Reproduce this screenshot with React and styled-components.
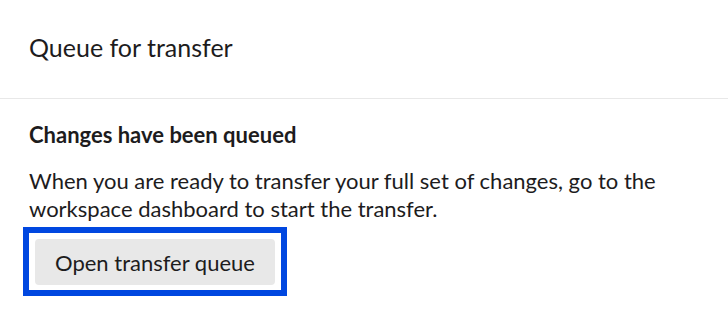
import React from "react";
import styled, { createGlobalStyle } from "styled-components";

const Global = createGlobalStyle`
  html, body { margin: 0; padding: 0; background: #ffffff; }
  body { font-family: Lato, "Open Sans", sans-serif; color: #1d1c1d; }
`;

const Page = styled.div`
  width: 728px;
  height: 319px;
  display: flex;
  flex-direction: column;
  background: #fff;
`;

const Header = styled.header`
  height: 99px;
  box-sizing: border-box;
  padding: 0 29px 4px;
  display: flex;
  align-items: center;
  border-bottom: 1px solid #e8e8e8;
`;

const Title = styled.h1`
  margin: 0;
  font-size: 25px;
  font-weight: 400;
  line-height: 30px;
`;

const Body = styled.section`
  padding: 22px 29px 0;
  display: flex;
  flex-direction: column;
  align-items: flex-start;
`;

const Heading = styled.h2`
  margin: 0;
  font-size: 22px;
  font-weight: 700;
  line-height: 28px;
`;

const Text = styled.p`
  margin: 18px 0 0;
  font-size: 22px;
  line-height: 28px;
`;

const FocusRing = styled.div`
  margin: 4px 0 0 -6px;
  padding: 6px 6px 5px;
  border: 6px solid #0047e0;
  display: flex;
`;

const Button = styled.button`
  height: 46px;
  padding: 0 20px;
  font-family: Lato, "Open Sans", sans-serif;
  font-size: 22px;
  color: #1d1c1d;
  background: #e8e8e8;
  border: none;
  border-radius: 4px;
  outline: none;
`;

export default function App() {
  return (
    <>
      <Global />
      <Page>
        <Header>
          <Title>Queue for transfer</Title>
        </Header>
        <Body>
          <Heading>Changes have been queued</Heading>
          <Text>
            When you are ready to transfer your full set of changes, go to the
            <br />
            workspace dashboard to start the transfer.
          </Text>
          <FocusRing>
            <Button>Open transfer queue</Button>
          </FocusRing>
        </Body>
      </Page>
    </>
  );
}
